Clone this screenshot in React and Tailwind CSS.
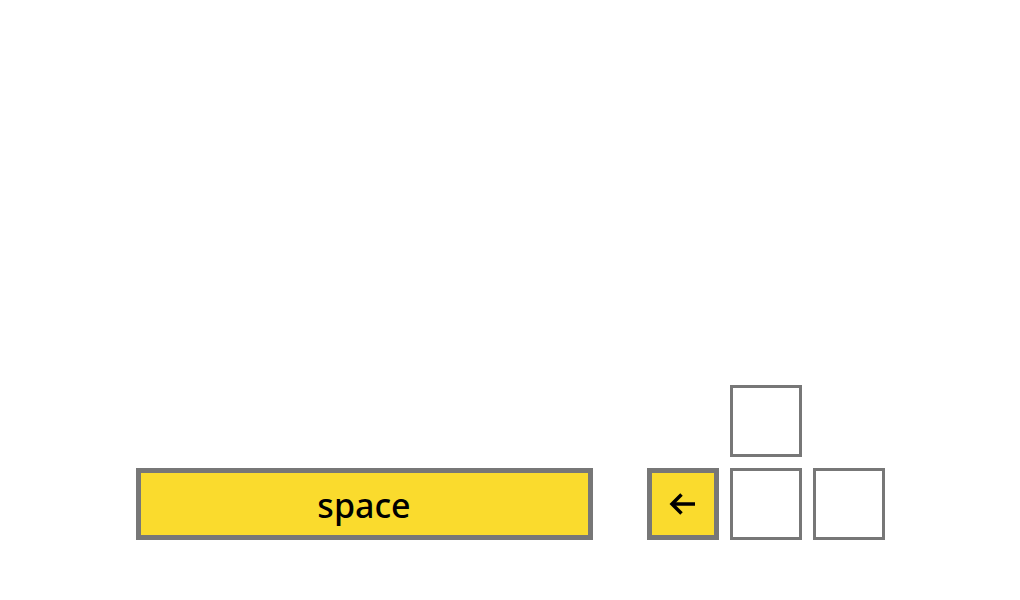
export default function App() {
  return (
    <div className="h-[600px] w-full bg-white flex items-end justify-center pb-[60px] gap-[54px]">
      {/* Space key */}
      <div className="w-[457px] h-[72px] bg-[#fadb2d] border-[5px] border-[#777777] flex items-center justify-center">
        <span className="text-[34px] leading-none font-medium text-black pt-[2px]" style={{ fontFamily: '"Noto Sans", sans-serif' }}>
          space
        </span>
      </div>

      {/* Arrow keys */}
      <div className="grid grid-cols-[72px_72px_72px] grid-rows-[72px_72px] gap-[11px]">
        <div />
        <div className="border-[3px] border-[#777777] bg-white" />
        <div />
        <div className="bg-[#fadb2d] border-[5px] border-[#777777] flex items-center justify-center">
          <svg className="shrink-0 ml-[-2px]" width="28" height="24" viewBox="0 0 28 24" fill="none" stroke="black" strokeWidth="3.5" strokeLinejoin="miter">
            <path d="M4 12H27" />
            <path d="M13.5 2.5L4 12L13.5 21.5" />
          </svg>
        </div>
        <div className="border-[3px] border-[#777777] bg-white" />
        <div className="border-[3px] border-[#777777] bg-white" />
      </div>
    </div>
  );
}
